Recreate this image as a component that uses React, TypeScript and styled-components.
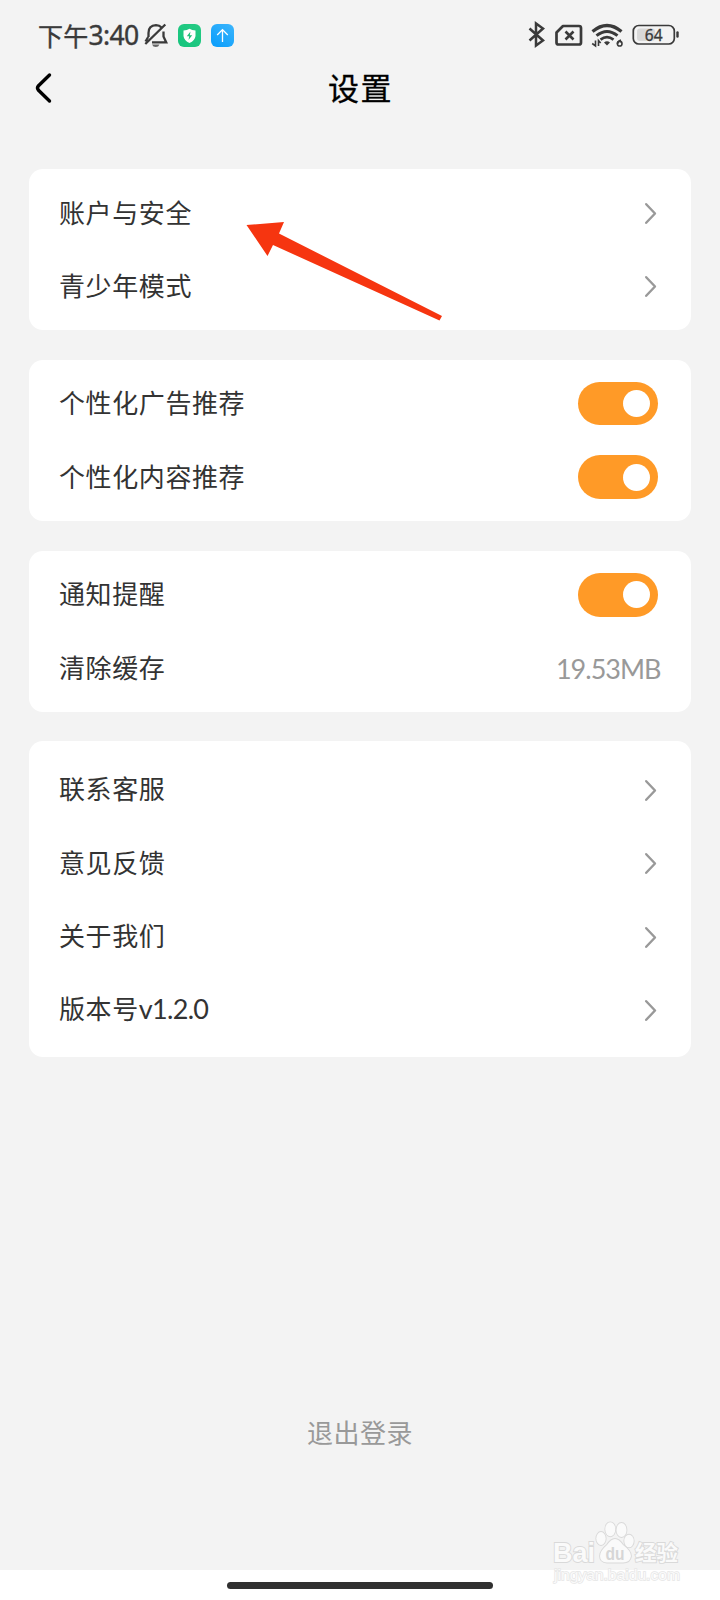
import React from 'react';
import styled, { createGlobalStyle } from 'styled-components';

const GlobalStyle = createGlobalStyle`
  * { box-sizing: border-box; }
  body { margin: 0; background: #f3f3f3; }
`;

const Screen = styled.div`
  position: relative;
  display: flex;
  flex-direction: column;
  width: 720px;
  height: 1600px;
  overflow: hidden;
  background: #f3f3f3;
  color: #333;
  font-family: 'Noto Sans CJK SC', sans-serif;
`;

const StatusBar = styled.header`
  display: flex;
  align-items: center;
  justify-content: space-between;
  height: 70px;
  padding: 0 40px 0 38px;
`;

const StatusLeft = styled.div`
  display: flex;
  align-items: center;
`;

const Clock = styled.span`
  display: flex;
  align-items: center;
  width: 105px;
  padding-bottom: 1px;
  font-size: 25px;
  font-weight: 400;
  line-height: 36px;
  letter-spacing: 0.2px;
  white-space: nowrap;
  color: #3a3a3a;
  -webkit-text-stroke: 0.4px #3a3a3a;
`;

const ClockDigits = styled.span`
  font-family: 'Noto Sans', sans-serif;
  font-size: 26.5px;
  letter-spacing: -0.6px;
`;

const AppBadge = styled.span<{ $from: string; $to: string; $gap: number }>`
  display: flex;
  width: 23px;
  height: 23px;
  margin-left: ${(p) => p.$gap}px;
  border-radius: 6px;
  background: linear-gradient(215deg, ${(p) => p.$from}, ${(p) => p.$to});
`;

const NavBar = styled.nav`
  display: grid;
  grid-template-columns: 80px 1fr 80px;
  align-items: center;
  height: 36px;
`;

const BackButton = styled.button`
  display: flex;
  padding: 0 0 0 34px;
  border: 0;
  background: none;
`;

const Title = styled.h1`
  margin: 0;
  padding: 0 0 2px 1px;
  text-align: center;
  font-size: 31px;
  font-weight: 400;
  line-height: 34px;
  letter-spacing: 1.6px;
  color: #000;
  -webkit-text-stroke: 0.3px #000;
`;

const Groups = styled.main`
  display: flex;
  flex-direction: column;
  flex: 1;
  gap: 29.5px;
  padding: 63px 29.5px 0 29px;
`;

const Card = styled.section<{ $padTop: number; $padBottom: number }>`
  padding: ${(p) => p.$padTop}px 30px ${(p) => p.$padBottom}px;
  border-radius: 14px;
  background: #fff;
`;

const Row = styled.div`
  display: flex;
  align-items: center;
  justify-content: space-between;
  height: 73.3px;
`;

const Label = styled.span`
  display: flex;
  align-items: center;
  padding-bottom: 3px;
  font-size: 26px;
  font-weight: 400;
  line-height: 36px;
  letter-spacing: 0.6px;
  white-space: nowrap;
`;

const Latin = styled.span`
  padding-top: 2px;
  font-family: Lato, sans-serif;
  font-size: 27px;
  letter-spacing: -0.7px;
`;

const Value = styled.span`
  padding-top: 1px;
  font-family: Lato, sans-serif;
  font-size: 27px;
  line-height: 36px;
  letter-spacing: -1px;
  color: #999;
`;

const Toggle = styled.button`
  display: flex;
  align-items: center;
  justify-content: flex-end;
  width: 80px;
  height: 43.5px;
  margin-right: 3px;
  padding: 0 8px;
  border: 0;
  border-radius: 22px;
  background: #ff9a27;
`;

const Knob = styled.span`
  width: 27px;
  height: 27px;
  border-radius: 50%;
  background: #fff;
`;

const Logout = styled.button`
  align-self: center;
  margin: 0 0 120px;
  padding: 0;
  border: 0;
  background: none;
  font: 400 26px/36px 'Noto Sans CJK SC', sans-serif;
  letter-spacing: 0.5px;
  color: #999;
`;

const HomeArea = styled.footer`
  display: flex;
  justify-content: center;
  height: 30px;
  padding-top: 12px;
  background: #fff;
`;

const HomeBar = styled.div`
  width: 266px;
  height: 7px;
  border-radius: 4px;
  background: #303030;
`;

const PointerArrow = styled.svg`
  position: absolute;
  left: 240px;
  top: 215px;
`;

const Watermark = styled.svg`
  position: absolute;
  left: 545px;
  top: 1515px;
`;

const Chevron = () => (
  <svg width="18" height="24" viewBox="0 0 18 24">
    <path d="M3.200 3.200L12 12.500L3.200 21.800" fill="none" stroke="#999" strokeWidth="2.4" strokeLinecap="round" strokeLinejoin="round" />
  </svg>
);

type Item = { label: string; latin?: string; kind: 'link' | 'toggle' | 'value'; value?: string };

const groups: { top: number; bottom: number; items: Item[] }[] = [
  { top: 7.5, bottom: 7, items: [{ label: '账户与安全', kind: 'link' }, { label: '青少年模式', kind: 'link' }] },
  { top: 7.5, bottom: 7.5, items: [{ label: '个性化广告推荐', kind: 'toggle' }, { label: '个性化内容推荐', kind: 'toggle' }] },
  { top: 7.5, bottom: 7, items: [{ label: '通知提醒', kind: 'toggle' }, { label: '清除缓存', kind: 'value', value: '19.53MB' }] },
  {
    top: 12,
    bottom: 10.5,
    items: [
      { label: '联系客服', kind: 'link' },
      { label: '意见反馈', kind: 'link' },
      { label: '关于我们', kind: 'link' },
      { label: '版本号', latin: 'v1.2.0', kind: 'link' },
    ],
  },
];

const StatusIcons = () => (
  <svg width="154" height="30" viewBox="526 20 154 30" fill="none" stroke="#3a3a3a">
    <path d="M529.5 28.5L543 40.5L536 45.500V23.500L543 28.5L529.5 40.5" strokeWidth="2.5" strokeLinejoin="miter" />
    <path d="M563 26H579Q581 26 581 28V42.500Q581 44.500 579 44.500H558.500Q556.500 44.500 556.500 42.500V32.500Z" strokeWidth="2.7" strokeLinejoin="round" />
    <path d="M565.500 31.500L573.500 39.500M573.500 31.500L565.500 39.500" strokeWidth="2.6" />
    <path d="M592.500 31.500Q607 19.500 621.500 31.500" strokeWidth="3.2" />
    <path d="M596.500 35.700Q607 27.200 617.500 35.700" strokeWidth="3" />
    <path d="M600.500 39.600Q607 34.600 613.500 39.600" strokeWidth="2.7" />
    <path d="M604 42.500Q607 39.800 610 42.500L607 45.500Z" fill="#3a3a3a" stroke="none" />
    <path d="M595.500 40.500V46L592.200 43.500M598.500 46V40.500L600.700 43" strokeWidth="1.6" />
    <path d="M621 40Q617.700 41 617.400 43.800" strokeWidth="1.7" />
    <circle cx="619.700" cy="43.700" r="2.300" strokeWidth="1.600" />
    <rect x="637" y="28.500" width="18" height="12.500" rx="3" fill="#d8d8d8" stroke="none" />
    <rect x="633.300" y="25.500" width="41" height="18.500" rx="5.500" strokeWidth="1.700" />
    <path d="M677.500 32.500V36.500" strokeWidth="2.400" strokeLinecap="round" />
    <text x="653.700" y="40.500" textAnchor="middle" fill="#3a3a3a" stroke="#3a3a3a" strokeWidth="0.3" fontFamily="Noto Sans, sans-serif" fontSize="15.500">64</text>
  </svg>
);

const MutedBell = () => (
  <svg width="26" height="28" viewBox="0 0 26 28" fill="none" stroke="#3a3a3a" strokeWidth="2.3">
    <path d="M5.500 16V12Q5.500 4.500 13 4.200Q16.500 4.200 18.500 6.500M20.500 10.500V15.500L23.200 21.300H9" />
    <path d="M5.200 16L2.500 20.500M2.300 23L22.300 3.500" />
    <path d="M9 23.500H16.500Q15.500 26 12.800 26Q10 26 9 23.500Z" fill="#666" stroke="none" />
  </svg>
);

export default function App() {
  return (
    <Screen>
      <GlobalStyle />
      <StatusBar>
        <StatusLeft>
          <Clock>
            下午<ClockDigits>3:40</ClockDigits>
          </Clock>
          <MutedBell />
          <AppBadge $from="#25cb84" $to="#16c47d" $gap={9}>
            <svg width="23" height="23" viewBox="0 0 23 23">
              <path d="M11.500 4.800Q14 6.300 17.500 6.500V12Q17 16.500 11.500 19Q6 16.500 5.500 12V6.500Q9 6.300 11.500 4.800Z" fill="#fff" />
              <path d="M12.500 7.500L8.800 12.300H11.200L10.500 16L14.200 11.200H11.800Z" fill="#20bd79" />
            </svg>
          </AppBadge>
          <AppBadge $from="#3cb5fc" $to="#079cfb" $gap={10}>
            <svg width="23" height="23" viewBox="0 0 23 23" fill="none" stroke="#fff" strokeWidth="1.300">
              <path d="M11.500 18V5.800M6.200 11L11.500 5.600L16.800 11" />
            </svg>
          </AppBadge>
        </StatusLeft>
        <StatusIcons />
      </StatusBar>

      <NavBar>
        <BackButton aria-label="返回">
          <svg width="20" height="32" viewBox="0 0 20 32" fill="none" stroke="#000" strokeWidth="3.400" strokeLinecap="round" strokeLinejoin="round">
            <path d="M15.500 3L4.500 13.700Q2.500 16 4.500 18.300L15.500 29" />
          </svg>
        </BackButton>
        <Title>设置</Title>
      </NavBar>

      <Groups>
        {groups.map((group, i) => (
          <Card key={i} $padTop={group.top} $padBottom={group.bottom}>
            {group.items.map((item) => (
              <Row key={item.label}>
                <Label>
                  {item.label}
                  {item.latin && <Latin>{item.latin}</Latin>}
                </Label>
                {item.kind === 'link' && <Chevron />}
                {item.kind === 'toggle' && (
                  <Toggle role="switch" aria-checked="true">
                    <Knob />
                  </Toggle>
                )}
                {item.kind === 'value' && <Value>{item.value}</Value>}
              </Row>
            ))}
          </Card>
        ))}
      </Groups>

      <Logout>退出登录</Logout>
      <HomeArea>
        <HomeBar />
      </HomeArea>

      <PointerArrow width="210" height="115" viewBox="240 215 210 115">
        <path d="M246.500 225L284 222L279 233.500L442 316L439.500 320.500L273 245L267.500 256Z" fill="#f63510" />
      </PointerArrow>

      <Watermark width="150" height="75" viewBox="545 1515 150 75" fill="#fafafa" stroke="#d9d9d9" strokeWidth="1.800" paintOrder="stroke">
        <text x="553" y="1561.500" textLength="42" lengthAdjust="spacingAndGlyphs" fontFamily="Liberation Sans, sans-serif" fontWeight="700" fontSize="28">Bai</text>
        <ellipse cx="601" cy="1538.500" rx="4.700" ry="6.500" />
        <ellipse cx="610.300" cy="1529.300" rx="5" ry="7" />
        <ellipse cx="621.500" cy="1530" rx="5" ry="7" />
        <ellipse cx="629" cy="1541" rx="4.700" ry="6.300" />
        <path d="M615 1539Q619 1539 623 1545Q631 1551 631 1556Q630 1563 622 1562.500H607Q600 1562 600 1556Q600 1551 607 1545Q611 1539 615 1539Z" />
        <text x="605.500" y="1560" textLength="19" lengthAdjust="spacingAndGlyphs" fontFamily="Liberation Sans, sans-serif" fontWeight="700" fontSize="18" fill="#d6d6d6" stroke="none">du</text>
        <text x="635" y="1560" textLength="43" lengthAdjust="spacingAndGlyphs" fontFamily="Noto Sans CJK SC, sans-serif" fontWeight="700" fontSize="21">经验</text>
        <text x="554" y="1579.500" textLength="126" lengthAdjust="spacingAndGlyphs" fontFamily="Liberation Sans, sans-serif" fontSize="15" stroke="#e6e6e6" strokeWidth="1.400">jingyan.baidu.com</text>
      </Watermark>
    </Screen>
  );
}
